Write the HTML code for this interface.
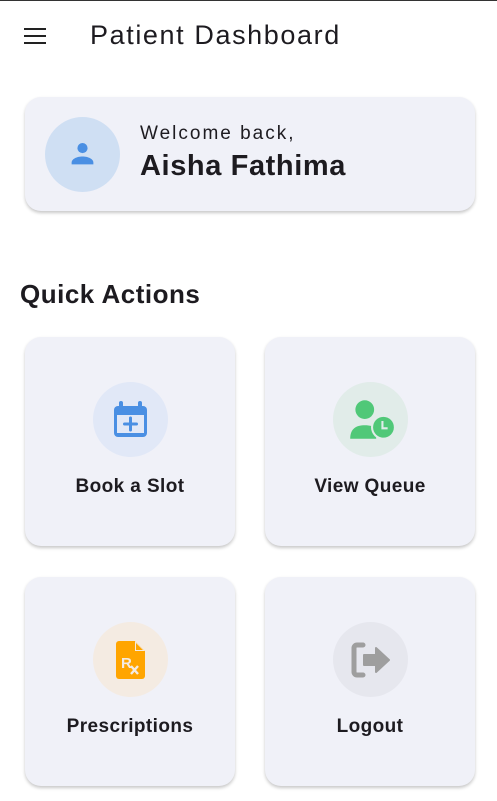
<!DOCTYPE html>
<html><head><meta charset="utf-8"><style>
*{margin:0;padding:0;box-sizing:border-box}
body{width:497px;height:801px;background:#fff;font-family:"Liberation Sans",sans-serif;color:#1d1b20;position:relative;overflow:hidden;border-top:1px solid #333}
.abs{position:absolute}
.card{position:absolute;background:#f0f1f8;border-radius:16px;box-shadow:0 2px 3px rgba(0,0,0,.22)}
.circ{position:absolute;border-radius:50%;width:75px;height:75px;left:50%;margin-left:-37px;top:45px;display:flex;align-items:center;justify-content:center}
.lbl{position:absolute;left:0;right:0;top:139px;text-align:center;font-size:19px;font-weight:bold;letter-spacing:.4px;color:#1d1b20}
</style></head><body>
<div class="abs" style="left:24px;top:27px;width:22px;height:16px">
<div style="height:2px;background:#222;margin-bottom:5px"></div><div style="height:2px;background:#222;margin-bottom:5px"></div><div style="height:2px;background:#222"></div></div>
<div class="abs" style="left:90px;top:19px;font-size:27px;letter-spacing:1.6px">Patient Dashboard</div>

<div class="card" style="left:25px;top:96px;width:450px;height:114px">
<div class="abs" style="left:20px;top:20px;width:75px;height:75px;border-radius:50%;background:#cfdff3">
<svg class="abs" style="left:23px;top:22px" width="29" height="29" viewBox="0 0 24 24"><circle cx="12" cy="7.5" r="4.2" fill="#4a8fe3"/><path d="M3 21v-1.5c0-3 4.5-5 9-5s9 2 9 5V21z" fill="#4a8fe3"/></svg></div>
<div class="abs" style="left:115px;top:26px;font-size:19px;letter-spacing:2px">Welcome back,</div>
<div class="abs" style="left:115px;top:53px;font-size:29px;font-weight:bold;letter-spacing:.6px">Aisha Fathima</div>
</div>

<div class="abs" style="left:20px;top:278px;font-size:26px;font-weight:bold;letter-spacing:.5px">Quick Actions</div>

<div class="card" style="left:25px;top:336px;width:210px;height:209px">
<div class="circ" style="background:#e1e8f7"><svg width="38" height="40" viewBox="0 0 38 40"><rect x="2" y="6" width="33" height="31" rx="4" fill="#4a8fe3"/><rect x="7" y="1" width="4" height="8" rx="2" fill="#4a8fe3"/><rect x="26" y="1" width="4" height="8" rx="2" fill="#4a8fe3"/><rect x="5" y="15" width="27" height="18" fill="#e1e8f7"/><path d="M18.5 18v12M12.5 24h12" stroke="#4a8fe3" stroke-width="3" stroke-linecap="round"/></svg></div>
<div class="lbl">Book a Slot</div></div>

<div class="card" style="left:265px;top:336px;width:210px;height:209px">
<div class="circ" style="background:#e1ece9"><svg width="52" height="42" viewBox="0 0 50 40"><circle cx="19" cy="10" r="9" fill="#50c878"/><path d="M5 38c0-10 6-13 14-13 5 0 9 1 11 3v10z" fill="#50c878"/><circle cx="37" cy="27" r="12" fill="#e1ece9"/><circle cx="37" cy="27" r="10" fill="#50c878"/><path d="M36 21v7h5" stroke="#e1ece9" stroke-width="2" fill="none"/></svg></div>
<div class="lbl">View Queue</div></div>

<div class="card" style="left:25px;top:576px;width:210px;height:209px">
<div class="circ" style="background:#f4ebe2"><svg width="30" height="38" viewBox="0 0 30 38"><path d="M3 0h16l10 10v25a3 3 0 0 1-3 3H3a3 3 0 0 1-3-3V3a3 3 0 0 1 3-3z" fill="#ffa500"/><path d="M19 0v10h10" fill="#f4ebe2"/><path d="M20 2v7h7" fill="#ffa500"/><text x="5" y="27" font-family="Liberation Sans" font-size="15" font-weight="bold" fill="#f4ebe2">R</text><path d="M15 25l7 8M22 25l-7 8" stroke="#f4ebe2" stroke-width="2.4"/></svg></div>
<div class="lbl">Prescriptions</div></div>

<div class="card" style="left:265px;top:576px;width:210px;height:209px">
<div class="circ" style="background:#e6e7ee"><svg width="40" height="36" viewBox="0 0 40 36"><path d="M12 3H6a3 3 0 0 0-3 3v24a3 3 0 0 0 3 3h6" stroke="#9e9e9e" stroke-width="5" fill="none" stroke-linecap="round"/><path d="M13 13h12V6l13 12-13 12v-7H13z" fill="#9e9e9e" stroke="#9e9e9e" stroke-width="2" stroke-linejoin="round"/></svg></div>
<div class="lbl">Logout</div></div>
</body></html>
